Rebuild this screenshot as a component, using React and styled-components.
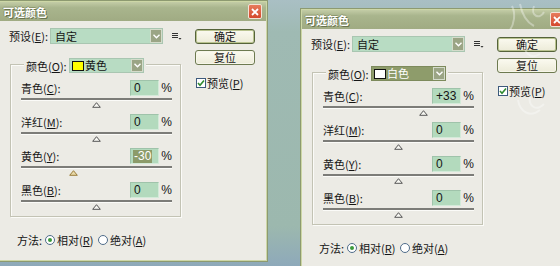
import React from 'react';
import styled, { createGlobalStyle } from 'styled-components';

const Global = createGlobalStyle`
  html, body { margin: 0; padding: 0; }
  body { font-family: "Noto Sans CJK SC", "Liberation Sans", sans-serif; font-size: 11px; color: #151515; }
`;

const Desktop = styled.div`
  position: relative;
  width: 560px;
  height: 266px;
  overflow: hidden;
  background: linear-gradient(180deg, #a9bfc4 0%, #9fbab3 12%, #9cb8ae 85%, #8ea9ba 100%);
`;

const Window = styled.div`
  position: absolute;
  left: ${(p) => p.$x}px;
  top: ${(p) => p.$y}px;
  width: 270px;
  height: 262px;
  box-sizing: border-box;
  border: 1px solid #8d9a70;
  box-shadow: inset 0 0 0 1px #cdd7a6;
  background: #ecebe5;
  display: flex;
  flex-direction: column;
  padding: 1px;
`;

const TitleBar = styled.div`
  flex: none;
  height: 19px;
  display: flex;
  align-items: center;
  justify-content: space-between;
  padding: 0 4px 0 3px;
  background: linear-gradient(180deg, #c3cca6 0%, #a9b58d 30%, #a0ab83 100%);
`;

const Title = styled.span`
  color: #fff;
  font-weight: bold;
  font-size: 11px;
  line-height: 14px;
  text-shadow: 1px 1px 0 #69744e, -1px 0 0 #8c976f, 0 -1px 0 #8c976f;
`;

const CloseBtn = styled.div`
  width: 14px;
  height: 15px;
  box-sizing: border-box;
  border: 1px solid #f3e3d6;
  border-radius: 2px;
  background: linear-gradient(180deg, #e77c5c, #d4492c);
  display: flex;
  align-items: center;
  justify-content: center;
`;

const Body = styled.div`
  flex: 1;
  display: flex;
  padding: 7px 0 0 9px;
`;

const LeftCol = styled.div`
  width: 186px;
  display: flex;
  flex-direction: column;
`;

const RightCol = styled.div`
  display: flex;
  flex-direction: column;
  padding-top: 1px;
`;

const PresetRow = styled.div`
  display: flex;
  align-items: center;
  height: 16px;
`;

const FieldLabel = styled.span`
  width: ${(p) => p.$w || 'auto'};
  flex: none;
  line-height: 14px;
  white-space: nowrap;
`;

const Combo = styled.div`
  width: ${(p) => p.$w}px;
  height: ${(p) => p.$h}px;
  box-sizing: border-box;
  border: 1px solid ${(p) => (p.$sel ? '#7d8a5c' : '#a9c6b1')};
  background: ${(p) => (p.$sel ? '#8e9c6b' : '#b8dcc3')};
  color: ${(p) => (p.$sel ? '#fff' : '#151515')};
  display: flex;
  align-items: center;
  padding-left: 2px;
  line-height: 13px;
  flex: none;
`;

const ComboText = styled.span`
  flex: 1;
  padding-left: ${(p) => p.$pl || 2}px;
`;

const ArrowBtn = styled.div`
  width: 12px;
  align-self: stretch;
  box-sizing: border-box;
  border: 1px solid #d4dccb;
  background: #9ba585;
  display: flex;
  align-items: center;
  justify-content: center;
`;

const Swatch = styled.span`
  width: 12px;
  height: 10px;
  box-sizing: border-box;
  border: 1px solid #111;
  background: ${(p) => p.$c};
  flex: none;
`;

const MenuIcon = styled.svg`
  margin-left: 9px;
  flex: none;
`;

const GroupBox = styled.div`
  position: relative;
  margin: 20px 0 0 1px;
  width: 171px;
  box-sizing: border-box;
  border: 1px solid #c3c3b4;
  box-shadow: inset 1px 1px 0 #fbfbf8, 1px 1px 0 #fbfbf8;
  padding: 15px 8px 0 10px;
`;

const Legend = styled.div`
  position: absolute;
  top: -7px;
  left: 13px;
  display: flex;
  align-items: center;
  padding: 0 2px;
  background: #ecebe5;
`;

const SliderRow = styled.div`
  height: 34px;
  display: flex;
  flex-direction: column;
`;

const RowTop = styled.div`
  display: flex;
  align-items: center;
  height: 16px;
`;

const NumInput = styled.div`
  width: 31px;
  height: 16px;
  box-sizing: border-box;
  border-top: 1px solid #9fc3aa;
  border-left: 1px solid #9fc3aa;
  border-right: 1px solid #d3ead9;
  border-bottom: 1px solid #d3ead9;
  background: #b3dabd;
  display: flex;
  align-items: center;
  padding-left: 2px;
  line-height: 13px;
  font-family: "Liberation Sans", sans-serif;
  font-size: 12px;
`;

const SelText = styled.span`
  background: ${(p) => (p.$sel ? '#8c9b6a' : 'transparent')};
  color: ${(p) => (p.$sel ? '#fff' : '#151515')};
  padding: 0 1px;
`;

const Pct = styled.span`
  margin-left: 2px;
  font-family: "Liberation Sans", sans-serif;
  font-size: 12px;
  line-height: 13px;
`;

const Track = styled.div`
  position: relative;
  margin-top: 2px;
  height: 2px;
  background: #7c7c78;
  border-bottom: 1px solid #fbfbf8;
`;

const Thumb = styled.svg`
  position: absolute;
  top: 4px;
`;

const MethodRow = styled.div`
  display: flex;
  align-items: center;
  margin-top: 16px;
  padding-left: 8px;
  height: 14px;
  line-height: 14px;
`;

const Radio = styled.span`
  width: 10px;
  height: 10px;
  box-sizing: border-box;
  border-radius: 50%;
  border: 1px solid #4f6c8a;
  background: #fff;
  display: inline-flex;
  align-items: center;
  justify-content: center;
  margin-right: 2px;
  flex: none;
  &::after {
    content: '';
    width: 4px;
    height: 4px;
    border-radius: 50%;
    background: ${(p) => (p.$on ? '#3c9a3c' : 'transparent')};
  }
`;

const Button = styled.div`
  width: 60px;
  height: 15px;
  box-sizing: border-box;
  border: 1px solid ${(p) => (p.$def ? '#55633a' : '#6d7a50')};
  box-shadow: inset 0 0 0 1px ${(p) => (p.$def ? '#b9c38f' : '#f7f6ea')};
  border-radius: 3px;
  background: linear-gradient(180deg, #fbfaf0, #ecebd8);
  display: flex;
  align-items: center;
  justify-content: center;
  line-height: 13px;
  margin-bottom: 6px;
`;

const CheckRow = styled.div`
  display: flex;
  align-items: center;
  margin: 5px 0 0 1px;
  line-height: 14px;
`;

const CheckBox = styled.span`
  width: 10px;
  height: 10px;
  box-sizing: border-box;
  border: 1px solid #3d5a7c;
  background: #fff;
  display: inline-flex;
  align-items: center;
  justify-content: center;
  margin-right: 1px;
`;

const Watermark = styled.svg`
  position: absolute;
  left: 500px;
  top: 0;
  opacity: 0.35;
  pointer-events: none;
`;

const Chevron = () => (
  <svg width="7" height="5" viewBox="0 0 7 5">
    <path d="M0.5 0.8 L3.5 3.8 L6.5 0.8" fill="none" stroke="#fff" strokeWidth="1.4" />
  </svg>
);

const rows = [
  { name: '青色', key: 'C' },
  { name: '洋红', key: 'M' },
  { name: '黄色', key: 'Y' },
  { name: '黑色', key: 'B' },
];

const TRACK_W = 151;

function Dialog({ x, y, colorName, swatch, colorSel, values, selRow }) {
  return (
    <Window $x={x} $y={y}>
      <TitleBar>
        <Title>可选颜色</Title>
        <CloseBtn>
          <svg width="8" height="8" viewBox="0 0 8 8">
            <path d="M1 1 L7 7 M7 1 L1 7" stroke="#fff" strokeWidth="1.8" />
          </svg>
        </CloseBtn>
      </TitleBar>
      <Body>
        <LeftCol>
          <PresetRow>
            <FieldLabel $w="41px">预设(<u>E</u>):</FieldLabel>
            <Combo $w={113} $h={16}>
              <ComboText>自定</ComboText>
              <ArrowBtn><Chevron /></ArrowBtn>
            </Combo>
            <MenuIcon width="10" height="8" viewBox="0 0 10 8">
              <path d="M0 1.5 H6 M0 3.5 H6 M0 5.5 H6" stroke="#333" strokeWidth="1" />
              <path d="M6.5 6 H9.5 L8 7.8 Z" fill="#333" />
            </MenuIcon>
          </PresetRow>
          <GroupBox>
            <Legend>
              <FieldLabel $w="43px">颜色(<u>O</u>):</FieldLabel>
              <Combo $w={75} $h={15} $sel={colorSel}>
                <Swatch $c={swatch} />
                <ComboText $pl={1}>{colorName}</ComboText>
                <ArrowBtn><Chevron /></ArrowBtn>
              </Combo>
            </Legend>
            {rows.map((r, i) => {
              const v = values[i];
              const pos = (TRACK_W * (v + 100)) / 200;
              const active = selRow === i;
              return (
                <SliderRow key={r.key}>
                  <RowTop>
                    <FieldLabel $w="109px">
                      {r.name}(<u>{r.key}</u>):
                    </FieldLabel>
                    <NumInput>
                      <SelText $sel={active}>{v > 0 ? `+${v}` : `${v}`}</SelText>
                    </NumInput>
                    <Pct>%</Pct>
                  </RowTop>
                  <Track>
                    <Thumb width="9" height="6" viewBox="0 0 9 6" style={{ left: `${pos - 4.5}px` }}>
                      <path
                        d="M4.5 0.7 L8.3 5.3 H0.7 Z"
                        fill={active ? '#e8d9a8' : '#f7f7f2'}
                        stroke={active ? '#9a7c3a' : '#555'}
                        strokeWidth="1"
                      />
                    </Thumb>
                  </Track>
                </SliderRow>
              );
            })}
          </GroupBox>
          <MethodRow>
            <FieldLabel $w="28px">方法:</FieldLabel>
            <Radio $on />
            <FieldLabel $w="41px">相对(<u>R</u>)</FieldLabel>
            <Radio />
            <FieldLabel>绝对(<u>A</u>)</FieldLabel>
          </MethodRow>
        </LeftCol>
        <RightCol>
          <Button $def>确定</Button>
          <Button>复位</Button>
          <CheckRow>
            <CheckBox>
              <svg width="8" height="8" viewBox="0 0 8 8">
                <path d="M1 4 L3 6.3 L7 1.5" fill="none" stroke="#2f8a2f" strokeWidth="1.6" />
              </svg>
            </CheckBox>
            <FieldLabel>预览(<u>P</u>)</FieldLabel>
          </CheckRow>
        </RightCol>
      </Body>
    </Window>
  );
}

export default function App() {
  return (
    <>
      <Global />
      <Desktop>
        <Dialog
          x={-2}
          y={0}
          colorName="黄色"
          swatch="#ffff00"
          colorSel={false}
          values={[0, 0, -30, 0]}
          selRow={2}
        />
        <Dialog
          x={300}
          y={8}
          colorName="白色"
          swatch="#ffffff"
          colorSel
          values={[33, 0, 0, 0]}
          selRow={-1}
        />
        <Watermark width="60" height="140" viewBox="0 0 60 140">
          <path d="M12 6 C16 14 14 24 10 30 M20 4 C22 14 26 22 34 26 M34 6 C30 16 40 20 44 12 M26 40 C22 52 30 60 40 54" fill="none" stroke="#fff" strokeWidth="2" />
          <path d="M18 100 C20 112 30 118 40 110 M30 96 C28 106 36 112 44 104" fill="none" stroke="#fff" strokeWidth="2" />
        </Watermark>
      </Desktop>
    </>
  );
}
